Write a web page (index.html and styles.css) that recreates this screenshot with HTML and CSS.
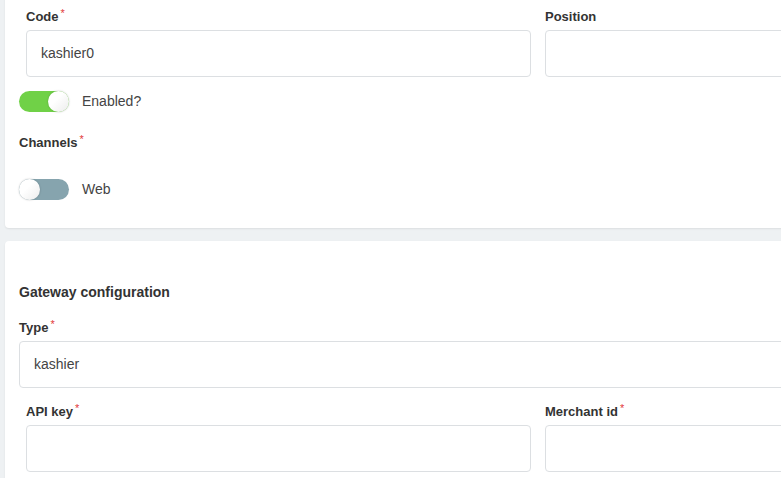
FILE: index.html
```html
<!DOCTYPE html>
<html>
<head>
<meta charset="utf-8">
<link rel="stylesheet" href="styles.css">
</head>
<body>
<div class="page">
  <section class="card card-top">
    <div class="row">
      <div class="field">
        <label class="label">Code<span class="req">*</span></label>
        <div class="input">kashier0</div>
      </div>
      <div class="field">
        <label class="label">Position</label>
        <div class="input"></div>
      </div>
    </div>
    <div class="toggle-row toggle-enabled">
      <span class="switch on"><span class="knob"></span></span>
      <span class="toggle-text">Enabled?</span>
    </div>
    <div class="label channels">Channels<span class="req">*</span></div>
    <div class="toggle-row toggle-web">
      <span class="switch off"><span class="knob"></span></span>
      <span class="toggle-text">Web</span>
    </div>
  </section>

  <section class="card card-gateway">
    <h3 class="heading">Gateway configuration</h3>
    <div class="field type-field">
      <label class="label">Type<span class="req">*</span></label>
      <div class="input">kashier</div>
    </div>
    <div class="row api-row">
      <div class="field">
        <label class="label">API key<span class="req">*</span></label>
        <div class="input"></div>
      </div>
      <div class="field">
        <label class="label">Merchant id<span class="req">*</span></label>
        <div class="input"></div>
      </div>
    </div>
  </section>
</div>
</body>
</html>
```

FILE: styles.css
```css
html, body {
  margin: 0;
  padding: 0;
  background: #eef1f3;
  overflow: hidden;
  height: 478px;
}
body {
  font-family: "Liberation Sans", Arial, sans-serif;
  color: #333;
}
.page {
  padding-left: 5px;
}
.card {
  background: #fff;
  width: 1100px;
  border-radius: 4px;
  box-shadow: 0 1px 2px rgba(0, 0, 0, 0.08);
  padding-left: 14px;
  box-sizing: border-box;
}
.card-top {
  margin-top: -10px;
  padding-top: 19px;
  padding-bottom: 28px;
}
.card-gateway {
  margin-top: 13px;
  padding-top: 42px;
  padding-bottom: 40px;
}
.row {
  display: grid;
  grid-template-columns: 505px 505px;
  column-gap: 14px;
  padding: 0 7px;
}
.field {
  display: flex;
  flex-direction: column;
}
.label {
  display: block;
  font-size: 13px;
  font-weight: bold;
  line-height: 16px;
  height: 16px;
  color: #333;
  margin-bottom: 5px;
}
.req {
  color: #e2383c;
  font-size: 11px;
  vertical-align: top;
  position: relative;
  top: -4px;
  margin-left: 2px;
  font-weight: normal;
}
.input {
  height: 47px;
  box-sizing: border-box;
  border: 1px solid #dcdfe2;
  border-radius: 4px;
  padding: 0 14px;
  font-size: 14px;
  line-height: 45px;
  color: #444;
  background: #fff;
}
.toggle-row {
  display: flex;
  align-items: center;
  gap: 13px;
  height: 21px;
}
.toggle-enabled {
  margin-top: 14px;
}
.toggle-web {
  margin-top: 28px;
}
.channels {
  margin-top: 23px;
  margin-bottom: 0;
}
.switch {
  position: relative;
  display: inline-block;
  width: 50px;
  height: 21px;
  border-radius: 11px;
}
.switch.on {
  background: #70d147;
}
.switch.off {
  background: #86a4ae;
}
.knob {
  position: absolute;
  top: 0;
  width: 21px;
  height: 21px;
  border-radius: 50%;
  background: linear-gradient(135deg, #ffffff 40%, #ececec);
  box-shadow: 0 0 2px rgba(0, 0, 0, 0.25);
}
.switch.on .knob {
  right: 0;
}
.switch.off .knob {
  left: 0;
}
.toggle-text {
  font-size: 14px;
  line-height: 16px;
  color: #444;
  position: relative;
  top: -1px;
}
.heading {
  margin: 0;
  font-size: 14px;
  font-weight: bold;
  line-height: 18px;
  color: #333;
}
.type-field {
  margin-top: 19px;
  margin-right: 14px;
}
.api-row {
  margin-top: 16px;
}
```
